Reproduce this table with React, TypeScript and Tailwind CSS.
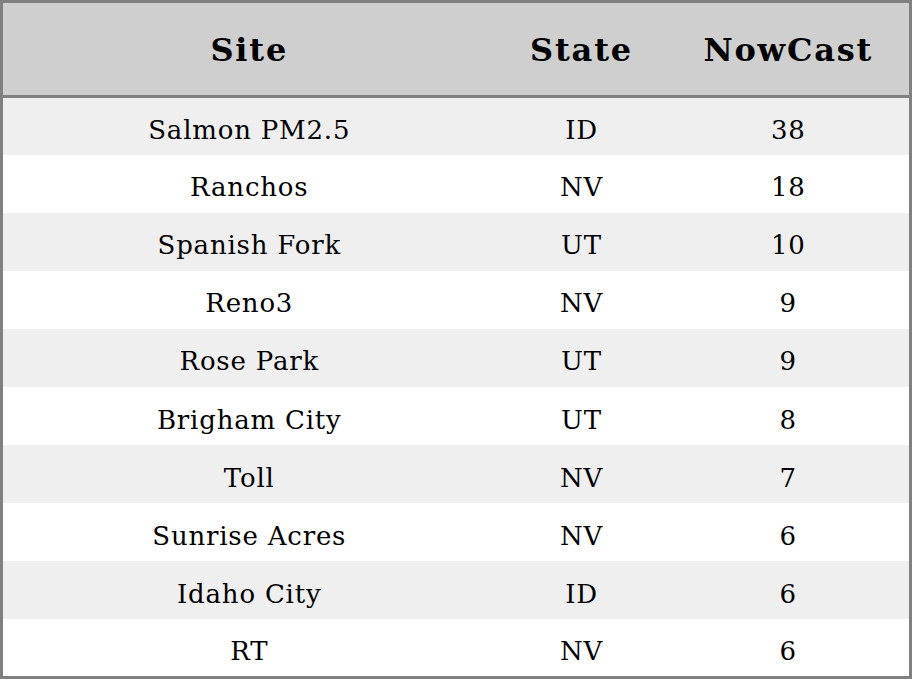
const rows = [
  { site: 'Salmon PM2.5', state: 'ID', nowcast: 38 },
  { site: 'Ranchos', state: 'NV', nowcast: 18 },
  { site: 'Spanish Fork', state: 'UT', nowcast: 10 },
  { site: 'Reno3', state: 'NV', nowcast: 9 },
  { site: 'Rose Park', state: 'UT', nowcast: 9 },
  { site: 'Brigham City', state: 'UT', nowcast: 8 },
  { site: 'Toll', state: 'NV', nowcast: 7 },
  { site: 'Sunrise Acres', state: 'NV', nowcast: 6 },
  { site: 'Idaho City', state: 'ID', nowcast: 6 },
  { site: 'RT', state: 'NV', nowcast: 6 },
];

export default function App() {
  return (
    <div className="w-[912px] h-[679px] bg-white font-['DejaVu_Serif',serif] text-black">
      <table className="w-full h-full border-collapse border-[3px] border-[#808080] table-fixed">
        <colgroup>
          <col className="w-[494px]" />
          <col className="w-[172px]" />
          <col />
        </colgroup>
        <thead>
          <tr className="h-[95px] bg-[#cfcfcf] border-b-[3px] border-[#808080]">
            <th className="text-[32px] tracking-[1.8px] font-bold text-center p-0 pt-[2px]">Site</th>
            <th className="text-[32px] tracking-[1.8px] font-bold text-center p-0 pt-[2px]">State</th>
            <th className="text-[32px] tracking-[1.8px] font-bold text-center p-0 pt-[2px]">NowCast</th>
          </tr>
        </thead>
        <tbody>
          {rows.map((r, i) => (
            <tr key={r.site} className={i % 2 === 0 ? 'h-[57.5px] bg-[#efefef]' : 'h-[57.5px] bg-white'}>
              <td className="text-[26px] tracking-[0.8px] text-center p-0 pt-[8px]">{r.site}</td>
              <td className="text-[26px] tracking-[0.8px] text-center p-0 pt-[8px]">{r.state}</td>
              <td className="text-[26px] tracking-[0.8px] text-center p-0 pt-[8px]">{r.nowcast}</td>
            </tr>
          ))}
        </tbody>
      </table>
    </div>
  );
}
